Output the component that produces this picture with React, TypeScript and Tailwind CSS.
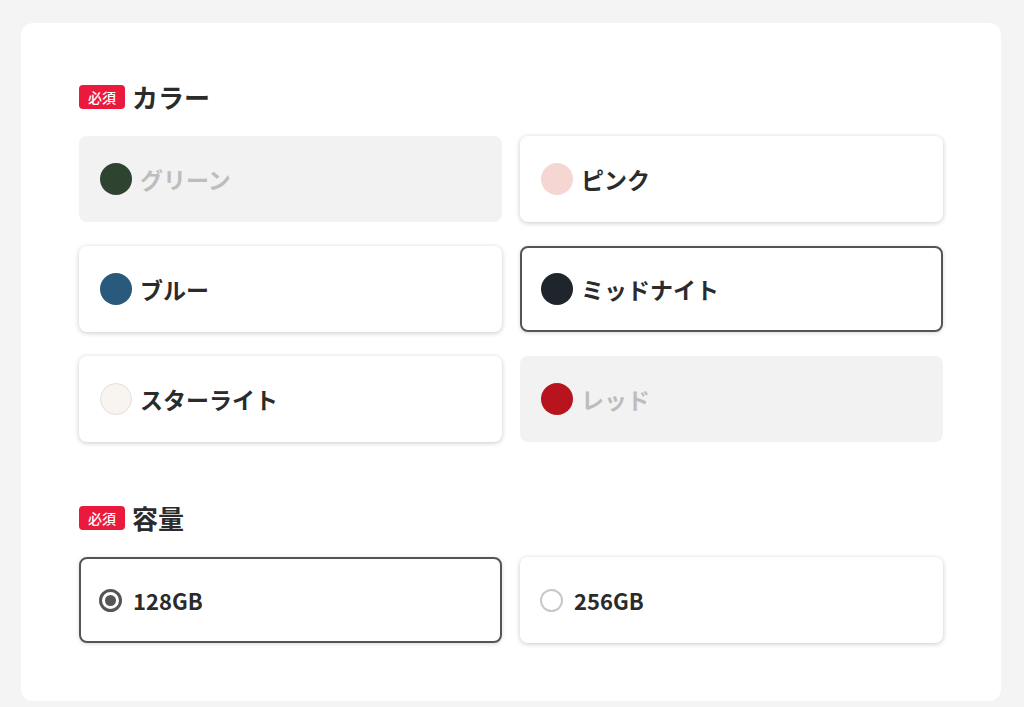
import React from "react";

const font = { fontFamily: '"Noto Sans CJK JP", "Noto Sans", sans-serif' };

type Color = { name: string; hex: string; disabled?: boolean; selected?: boolean; border?: boolean };

const colors: Color[] = [
  { name: "グリーン", hex: "#2f4430", disabled: true },
  { name: "ピンク", hex: "#f6d6d2" },
  { name: "ブルー", hex: "#2a5a7b" },
  { name: "ミッドナイト", hex: "#1f252c", selected: true },
  { name: "スターライト", hex: "#f8f5f0", border: true },
  { name: "レッド", hex: "#b8141d", disabled: true },
];

function Heading({ title }: { title: string }) {
  return (
    <div className="flex items-center gap-[7px] mb-[26px]">
      <span className="bg-[#ea1a3d] text-white text-[14px] leading-[24px] h-[24px] px-[9px] rounded-[4px] font-medium">
        必須
      </span>
      <span className="text-[26px] font-bold text-[#2b2b2b] leading-none">{title}</span>
    </div>
  );
}

function optionClass(disabled?: boolean, selected?: boolean) {
  if (disabled) return "bg-[#f2f2f2] text-[#bdbdbd]";
  if (selected) return "bg-white border-2 border-[#555555] text-[#2b2b2b] shadow-[0_1px_4px_rgba(0,0,0,0.15)]";
  return "bg-white text-[#2b2b2b] shadow-[0_1px_5px_rgba(0,0,0,0.22)]";
}

export default function App() {
  return (
    <div className="min-h-[707px] bg-[#f4f4f4] pt-[23px] pb-[7px] pl-[21px]" style={font}>
      <div className="w-[980px] bg-white rounded-[12px] px-[58px] pt-[61px] pb-[58px]">
        <Heading title="カラー" />
        <div className="grid grid-cols-2 gap-x-[18px] gap-y-[24px]">
          {colors.map((c) => (
            <div
              key={c.name}
              className={`h-[86px] rounded-[8px] flex items-center gap-[8px] ${
                c.selected ? "pl-[19px]" : "pl-[21px]"
              } ${optionClass(c.disabled, c.selected)}`}
            >
              <span
                className={`w-[32px] h-[32px] rounded-full shrink-0 ${c.border ? "border border-[#e3e0da]" : ""}`}
                style={{ backgroundColor: c.hex }}
              />
              <span className="text-[23px] font-bold leading-none">{c.name}</span>
            </div>
          ))}
        </div>

        <div className="mt-[63px]">
          <Heading title="容量" />
          <div className="grid grid-cols-2 gap-x-[18px]">
            <div className={`h-[86px] rounded-[8px] flex items-center gap-[11px] pl-[18px] ${optionClass(false, true)}`}>
              <span className="w-[23px] h-[23px] rounded-full border-[3px] border-[#555555] flex items-center justify-center shrink-0">
                <span className="w-[11px] h-[11px] rounded-full bg-[#555555]" />
              </span>
              <span className="text-[22px] font-bold leading-none">128GB</span>
            </div>
            <div className={`h-[86px] rounded-[8px] flex items-center gap-[11px] pl-[20px] ${optionClass(false, false)}`}>
              <span className="w-[23px] h-[23px] rounded-full border-2 border-[#c8c8c8] shrink-0" />
              <span className="text-[22px] font-bold leading-none">256GB</span>
            </div>
          </div>
        </div>
      </div>
    </div>
  );
}
